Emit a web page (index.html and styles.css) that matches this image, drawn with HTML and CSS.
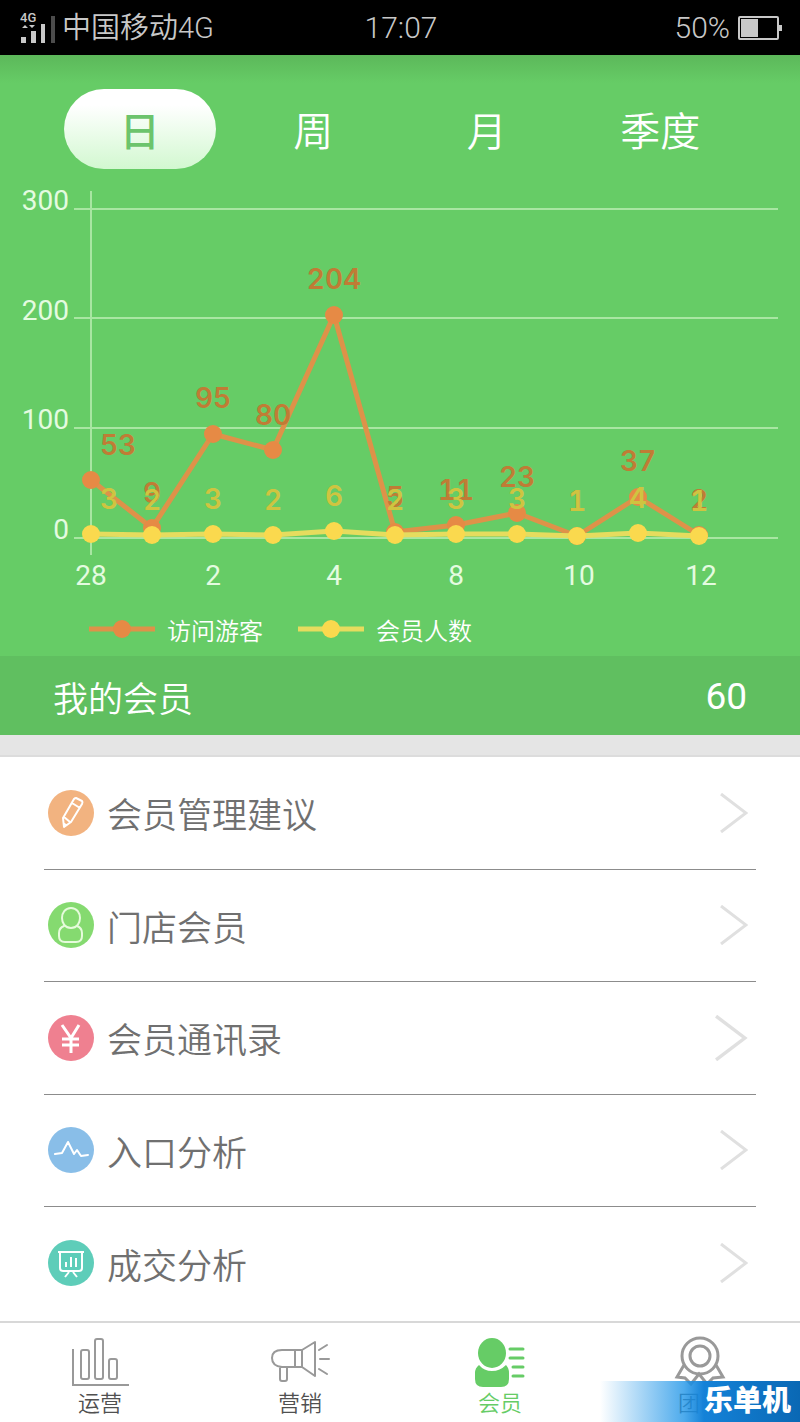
FILE: index.html
```html
<!DOCTYPE html>
<html lang="zh-CN">
<head>
    <meta charset="UTF-8">
    <meta name="viewport" content="width=device-width, initial-scale=1.0">
    <title>我的会员</title>
    <link rel="stylesheet" href="styles.css">
</head>
<body>
    <header class="status-bar">
        <div class="carrier">
            <svg class="signal-icon" width="36" height="34" viewBox="0 0 36 34" aria-hidden="true">
                <text class="signal-text" x="0" y="11">4G</text>
                <path d="M2 17l3-3 3 3zM9 14h6l-3 3z" fill="#c8c8c8"/>
                <path d="M1 26h5v6H1zM11 20h5v12h-5zM21 13h4v19h-4z" fill="#c8c8c8"/>
                <path d="M31 5h4v27h-4z" fill="#4c4c4c"/>
            </svg>
            <span>中国移动4G</span>
        </div>
        <div class="clock">17:07</div>
        <div class="battery">
            <span>50%</span>
            <svg width="44" height="26" viewBox="0 0 44 26" aria-hidden="true">
                <rect x="1" y="2" width="39" height="22" rx="1" fill="none" stroke="#c8c8c8" stroke-width="2"/>
                <path d="M3 4h17v18H3zM41 10h3v6h-3z" fill="#c8c8c8"/>
            </svg>
        </div>
    </header>

    <main>
        <section class="chart-panel">
            <div class="period-tabs">
                <button type="button" class="period active">日</button>
                <button type="button" class="period">周</button>
                <button type="button" class="period">月</button>
                <button type="button" class="period">季度</button>
            </div>

            <svg class="chart" viewBox="0 0 800 431" role="img" aria-label="访问游客和会员人数">
                <path class="grid-line" d="M74 40H778M74 149H778M74 259H778M74 369H778M91 22V386"/>

                <g class="axis-text axis-y">
                    <text x="69" y="41">300</text>
                    <text x="69" y="151">200</text>
                    <text x="69" y="260">100</text>
                    <text x="69" y="370">0</text>
                </g>
                <g class="axis-text axis-x">
                    <text x="91" y="416">28</text>
                    <text x="213" y="416">2</text>
                    <text x="334" y="416">4</text>
                    <text x="456" y="416">8</text>
                    <text x="579" y="416">10</text>
                    <text x="701" y="416">12</text>
                </g>

                <!-- visitors -->
                <polyline class="line visitors-line" points="91,311 152,359 213,265 273,281 334,146 395,363 456,356 517,344 577,367 638,328 699,366"/>
                <g class="visitors-dot">
                    <circle cx="91" cy="311" r="9"/>
                    <circle cx="152" cy="359" r="9"/>
                    <circle cx="213" cy="265" r="9"/>
                    <circle cx="273" cy="281" r="9"/>
                    <circle cx="334" cy="146" r="9"/>
                    <circle cx="395" cy="363" r="9"/>
                    <circle cx="456" cy="356" r="9"/>
                    <circle cx="517" cy="344" r="9"/>
                    <circle cx="577" cy="367" r="9"/>
                    <circle cx="638" cy="328" r="9"/>
                    <circle cx="699" cy="366" r="9"/>
                </g>
                <g class="value visitors-value">
                    <text class="first" x="100" y="286">53</text>
                    <text x="152" y="334">9</text>
                    <text x="213" y="239">95</text>
                    <text x="273" y="256">80</text>
                    <text x="334" y="120">204</text>
                    <text x="395" y="338">5</text>
                    <text x="456" y="331">11</text>
                    <text x="517" y="318">23</text>
                    <text x="577" y="342">1</text>
                    <text x="638" y="302">37</text>
                    <text x="699" y="341">2</text>
                </g>

                <!-- members -->
                <polyline class="line members-line" points="91,365 152,366 213,365 273,366 334,362 395,366 456,365 517,365 577,367 638,364 699,367"/>
                <g class="members-dot">
                    <circle cx="91" cy="365" r="9"/>
                    <circle cx="152" cy="366" r="9"/>
                    <circle cx="213" cy="365" r="9"/>
                    <circle cx="273" cy="366" r="9"/>
                    <circle cx="334" cy="362" r="9"/>
                    <circle cx="395" cy="366" r="9"/>
                    <circle cx="456" cy="365" r="9"/>
                    <circle cx="517" cy="365" r="9"/>
                    <circle cx="577" cy="367" r="9"/>
                    <circle cx="638" cy="364" r="9"/>
                    <circle cx="699" cy="367" r="9"/>
                </g>
                <g class="value members-value">
                    <text class="first" x="100" y="340">3</text>
                    <text x="152" y="341">2</text>
                    <text x="213" y="340">3</text>
                    <text x="273" y="341">2</text>
                    <text x="334" y="337">6</text>
                    <text x="395" y="341">2</text>
                    <text x="456" y="340">3</text>
                    <text x="517" y="340">3</text>
                    <text x="577" y="342">1</text>
                    <text x="638" y="339">4</text>
                    <text x="699" y="342">1</text>
                </g>
            </svg>

            <div class="legend">
                <div class="legend-item">
                    <svg width="68" height="20" viewBox="0 0 68 20" aria-hidden="true">
                        <path class="line visitors-line" d="M1 10H67"/>
                        <circle class="visitors-dot" cx="34" cy="10" r="9"/>
                    </svg>
                    <span>访问游客</span>
                </div>
                <div class="legend-item">
                    <svg width="68" height="20" viewBox="0 0 68 20" aria-hidden="true">
                        <path class="line members-line" d="M1 10H67"/>
                        <circle class="members-dot" cx="34" cy="10" r="9"/>
                    </svg>
                    <span>会员人数</span>
                </div>
            </div>
        </section>

        <section class="summary">
            <h1>我的会员</h1>
            <span class="summary-count">60</span>
        </section>

        <div class="spacer"></div>

        <div class="menu">
            <a href="#advice" class="menu-item">
                <svg class="menu-icon" viewBox="0 0 48 48" aria-hidden="true">
                    <circle cx="24" cy="24" r="23" fill="#f2b380"/>
                    <path d="M29 9l6 3q1 1 0 3L24 33l-7 5-1-9L27 10q1-1 2-1zM25 14l8 5M17 28l6 5M16 34l3 2" fill="none" stroke="#fff" stroke-width="2" stroke-linejoin="round"/>
                </svg>
                <span class="menu-label">会员管理建议</span>
                <svg class="arrow" viewBox="0 0 28 40" aria-hidden="true"><path d="M1 1L26 20 1 39"/></svg>
            </a>
            <a href="#store" class="menu-item">
                <svg class="menu-icon" viewBox="0 0 48 48" aria-hidden="true">
                    <circle cx="24" cy="24" r="23" fill="#85da70"/>
                    <path d="M24 7c12 0 12 20 0 20S12 7 24 7z" fill="none" stroke="#e6fbdc" stroke-width="2"/>
                    <path d="M17 25q-5 2-5 7v3q0 6 6 6h11q6 0 6-6v-3q0-5-5-7" fill="none" stroke="#e6fbdc" stroke-width="2" stroke-linecap="round"/>
                </svg>
                <span class="menu-label">门店会员</span>
                <svg class="arrow" viewBox="0 0 28 40" aria-hidden="true"><path d="M1 1L26 20 1 39"/></svg>
            </a>
            <a href="#contacts" class="menu-item">
                <svg class="menu-icon" viewBox="0 0 48 48" aria-hidden="true">
                    <circle cx="24" cy="24" r="23" fill="#ef8090"/>
                    <path d="M15 11l9 13 8-13M24 24v15M15 25h17M15 31h17" fill="none" stroke="#fff" stroke-width="3"/>
                </svg>
                <span class="menu-label">会员通讯录</span>
                <svg class="arrow arrow-large" viewBox="0 0 28 40" aria-hidden="true"><path d="M1 1L26 20 1 39"/></svg>
            </a>
            <a href="#entrance" class="menu-item">
                <svg class="menu-icon" viewBox="0 0 48 48" aria-hidden="true">
                    <circle cx="24" cy="24" r="23" fill="#89bee8"/>
                    <path d="M8 28l7-1 6-11 6 12 3-4 4 6 7-1" fill="none" stroke="#fff" stroke-width="2" stroke-linejoin="round" stroke-linecap="round"/>
                </svg>
                <span class="menu-label">入口分析</span>
                <svg class="arrow" viewBox="0 0 28 40" aria-hidden="true"><path d="M1 1L26 20 1 39"/></svg>
            </a>
            <a href="#deals" class="menu-item">
                <svg class="menu-icon" viewBox="0 0 48 48" aria-hidden="true">
                    <circle cx="24" cy="24" r="23" fill="#5ecdb9"/>
                    <path d="M11 13h26M13 13v16q0 3 3 3h16q3 0 3-3V13M22 33l-4 5M26 33l4 5M19 28v-5M24 28V18M29 28v-9" fill="none" stroke="#fff" stroke-width="2"/>
                </svg>
                <span class="menu-label">成交分析</span>
                <svg class="arrow" viewBox="0 0 28 40" aria-hidden="true"><path d="M1 1L26 20 1 39"/></svg>
            </a>
        </div>
    </main>

    <nav class="tab-bar">
        <a href="#operate" class="tab">
            <svg width="60" height="52" viewBox="0 0 60 52" aria-hidden="true">
                <g fill="none" stroke="#999" stroke-width="2">
                    <path d="M3 13v36h56"/>
                    <rect x="11" y="14" width="8" height="29" rx="2"/>
                    <rect x="25" y="3" width="8" height="40" rx="2"/>
                    <rect x="39" y="23" width="8" height="20" rx="2"/>
                </g>
            </svg>
            <span>运营</span>
        </a>
        <a href="#marketing" class="tab">
            <svg width="60" height="52" viewBox="0 0 60 52" aria-hidden="true">
                <g fill="none" stroke="#999" stroke-width="2" stroke-linejoin="round" stroke-linecap="round">
                    <path d="M32 14H12Q2 14 2 22t10 9h20zM25 14v17M32 14L45 6v34L32 31M10 31v12q0 2 2 2h3q2 0 2-2V31M49 14l8-5M50 23h9M49 33l8 5"/>
                </g>
            </svg>
            <span>营销</span>
        </a>
        <a href="#members" class="tab active">
            <svg width="60" height="52" viewBox="0 0 60 52" aria-hidden="true">
                <ellipse cx="22" cy="17" rx="14" ry="15" fill="#66cc66"/>
                <path d="M9 29q5 6 13 6t14-6q3 3 3 8v6q0 8-8 8H13q-8 0-8-8v-6q0-5 4-8z" fill="#66cc66"/>
                <path d="M40 13h13M40 22h13M43 31h10M43 40h10" fill="none" stroke="#66cc66" stroke-width="3" stroke-linecap="round"/>
            </svg>
            <span>会员</span>
        </a>
        <a href="#team" class="tab">
            <svg width="60" height="52" viewBox="0 0 60 52" aria-hidden="true">
                <g fill="none" stroke="#999" stroke-width="3">
                    <circle cx="30" cy="20" r="18"/>
                    <circle cx="30" cy="20" r="10"/>
                    <path d="M14 29L7 41l8 1 6 6 8-10 8 10 6-6 10-1-7-12"/>
                </g>
            </svg>
            <span>团队</span>
        </a>
        <div class="site-mark">乐单机</div>
    </nav>
</body>
</html>
```

FILE: styles.css
```css
* {
    box-sizing: border-box;
}

body {
    margin: 0;
    min-height: 100vh;
    display: flex;
    flex-direction: column;
    background-color: #ffffff;
    font-family: Roboto, "Noto Sans CJK SC", sans-serif;
    font-weight: 350;
    color: #707070;
}

a {
    color: inherit;
    text-decoration: none;
}

svg {
    display: block;
    flex-shrink: 0;
}

main {
    flex: 1;
    display: flex;
    flex-direction: column;
}

/* status bar */
.status-bar {
    display: grid;
    grid-template-columns: 1fr auto 1fr;
    align-items: center;
    height: 55px;
    padding: 0 18px 0 20px;
    background-color: #000000;
    color: #c8c8c8;
    font-size: 30px;
}

.carrier {
    display: flex;
    align-items: center;
    gap: 6px;
    font-size: 29px;
    line-height: 50px;
}

.signal-text {
    fill: #c8c8c8;
    font-size: 13px;
    font-weight: 500;
}

.battery {
    display: flex;
    justify-content: flex-end;
    align-items: center;
    gap: 8px;
}

/* chart */
.chart-panel {
    padding-top: 34px;
    background: linear-gradient(#5cb85a, #66cc66 28px);
}

.period-tabs {
    display: grid;
    grid-template-columns: repeat(4, 1fr);
    padding: 0 53px;
}

.period {
    justify-self: center;
    width: 152px;
    height: 80px;
    padding: 0;
    border: none;
    border-radius: 40px;
    background: none;
    color: #ffffff;
    font-family: inherit;
    font-size: 40px;
    font-weight: 350;
    cursor: pointer;
}

.period.active {
    background: linear-gradient(#ffffff 20%, #d2f8d0);
    color: #6cc46c;
    font-weight: 500;
}

.chart {
    width: 100%;
    height: auto;
}

.grid-line {
    stroke: #a8e6a2;
    stroke-width: 2;
    fill: none;
}

.axis-text {
    fill: #e4fbe0;
    font-size: 28px;
    font-weight: 400;
}

.axis-y {
    text-anchor: end;
}

.axis-x {
    text-anchor: middle;
}

.line {
    fill: none;
    stroke-width: 5;
    stroke-linejoin: round;
}

.visitors-line {
    stroke: #de9249;
}

.members-line {
    stroke: #e6dc5e;
}

.visitors-dot {
    fill: #e68a45;
}

.members-dot {
    fill: #fad94e;
}

.value {
    font-family: Inter, sans-serif;
    font-size: 28px;
    font-weight: 600;
    font-variant-numeric: tabular-nums;
    text-anchor: middle;
}

.value .first {
    text-anchor: start;
}

.visitors-value {
    fill: #c07c35;
}

.members-value {
    fill: #cfc440;
}

.legend {
    display: flex;
    align-items: center;
    gap: 34px;
    height: 56px;
    padding: 2px 88px 0;
    color: #ffffff;
    font-size: 24px;
}

.legend-item {
    display: flex;
    align-items: center;
    gap: 11px;
}

/* member total */
.summary {
    display: flex;
    justify-content: space-between;
    align-items: center;
    height: 79px;
    padding: 2px 53px 0;
    background-color: #60bf60;
    color: #ffffff;
}

.summary h1 {
    margin: 0;
    font-size: 35px;
    font-weight: 350;
}

.summary-count {
    font-size: 37px;
    font-weight: 400;
}

.spacer {
    height: 22px;
    background-color: #e5e5e5;
    border-bottom: 2px solid #dcdcdc;
}

/* menu list */
.menu {
    flex: 1;
    display: flex;
    flex-direction: column;
    padding: 0 44px 2px;
}

.menu-item {
    flex: 1;
    display: flex;
    align-items: center;
    min-height: 112px;
    padding: 0 8px 0 3px;
    border-bottom: 1px solid #8c8c8c;
}

.menu-item:last-child {
    border-bottom: none;
}

.menu-icon {
    width: 48px;
    height: 48px;
}

.menu-label {
    flex: 1;
    padding-left: 12px;
    font-size: 35px;
}

.arrow {
    width: 28px;
    height: 40px;
    fill: none;
    stroke: #e0e0e0;
    stroke-width: 3;
}

.arrow-large {
    width: 34px;
    height: 46px;
}

/* bottom navigation */
.tab-bar {
    position: relative;
    display: grid;
    grid-template-columns: repeat(4, 1fr);
    height: 101px;
    border-top: 2px solid #d8d8d8;
    background-color: #ffffff;
}

.tab {
    display: flex;
    flex-direction: column;
    align-items: center;
    padding-top: 13px;
    font-size: 22px;
    line-height: 32px;
    color: #505050;
}

.tab.active {
    color: #66cc66;
}

.site-mark {
    position: absolute;
    right: 0;
    bottom: 0;
    width: 200px;
    height: 41px;
    padding-right: 9px;
    background: linear-gradient(to right, rgba(33, 150, 232, 0), rgba(33, 150, 232, 0.8) 42%, #1482d8 52%, #0a68b4);
    color: #ffffff;
    font-size: 29px;
    font-weight: 900;
    line-height: 41px;
    text-align: right;
}
```
